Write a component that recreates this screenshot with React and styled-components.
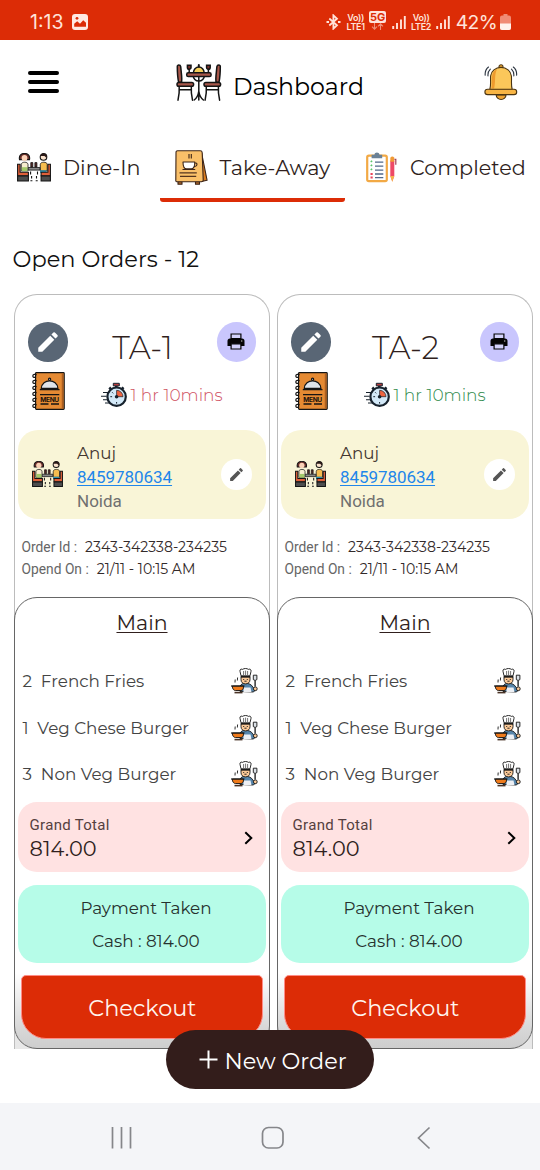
import React from 'react';
import styled, { createGlobalStyle } from 'styled-components';

const Global = createGlobalStyle`
  *{box-sizing:border-box}
  body{margin:0;background:#fff;overflow:hidden}
  svg{display:block;flex:none}
`;
const display = 'Montserrat, Inter, sans-serif';
const body = 'Roboto, "Liberation Sans", sans-serif';
const red = '#dc2c06';
const ink = '#301f1d';
const line = '#141414';

const Screen = styled.div`
  position:relative;width:540px;height:1170px;display:flex;flex-direction:column;
  background:#fff;font-family:${display};color:${ink};white-space:nowrap;
`;
const StatusBar = styled.div`
  height:40px;background:${red};color:#ffe3da;display:flex;align-items:center;
  padding:4px 29px 0 30px;font-family:Inter, sans-serif;
`;
const Clock = styled.span`font-size:19.5px;line-height:24px;width:42px;`;
const Indicators = styled.div`margin-left:auto;display:flex;align-items:center;height:20px;`;
const Volte = styled.div`
  width:21px;margin-left:4.5px;font-size:9px;font-weight:600;
  letter-spacing:-.3px;display:flex;flex-direction:column;align-items:center;
  span{line-height:9px}
`;
const Network = styled.div`margin:-3px 0 0 3px;width:17px;display:flex;flex-direction:column;align-items:center;`;
const Badge = styled.div`
  width:17px;height:12px;border-radius:2px;background:#ffe3da;color:${red};
  font-size:11px;line-height:12px;font-weight:700;text-align:center;
`;
const Percent = styled.span`font-size:19.3px;line-height:24px;letter-spacing:-.6px;margin:0 3px 0 6px;`;

const Header = styled.header`
  height:97px;padding:24px 22.5px 0 28px;display:grid;grid-template-columns:148px 1fr auto;align-items:start;
`;
const MenuButton = styled.div`
  width:31px;margin-top:7px;display:grid;gap:5.3px;
  i{height:3.8px;border-radius:2px;background:#000}
`;
const Brand = styled.div`display:flex;gap:10px;color:#000;`;
const BrandName = styled.h1`margin:10.5px 0 0;font-size:23.65px;font-weight:400;line-height:24px;`;

const Tabs = styled.nav`height:65px;display:flex;`;
const Tab = styled.div`
  width:${p => p.$w}px;padding-left:${p => p.$pad}px;display:flex;align-items:center;gap:${p => p.$gap}px;
  font-size:20.7px;line-height:24px;flex:none;border-radius:0 0 3px 3px;
  border-bottom:4px solid transparent;
  ${p => p.$active && `background:linear-gradient(to top, ${red} 4px, transparent 4px) border-box;`}
`;
const SectionTitle = styled.h2`
  margin:43px 0 0 12.6px;font-size:22.5px;font-weight:400;line-height:28px;color:#111;
`;
const Cards = styled.main`margin:21px 7px 0 14px;display:grid;grid-template-columns:256px 256px;gap:7px;`;
const Card = styled.article`
  height:755px;border:1px solid #bcbcbc;border-bottom:0;border-radius:23px 23px 0 0;
  display:flex;flex-direction:column;
  background:linear-gradient(to top, #e8e8e8 14px, #fff 14px);
`;
const CardHead = styled.div`height:67px;padding:27px 13px 0 13px;display:flex;`;
const Circle = styled.div`
  width:${p => p.$size}px;height:${p => p.$size}px;border-radius:50%;background:${p => p.$bg};
  display:flex;align-items:center;justify-content:center;flex:none;
`;
const TableName = styled.h3`
  flex:1;margin:6.5px 0 0 1px;text-align:center;font-size:31.2px;line-height:39px;font-weight:350;
`;
const TimeRow = styled.div`height:38px;margin:10px 0 0 17px;display:flex;gap:36px;`;
const Elapsed = styled.div`
  display:flex;align-items:center;gap:2.5px;padding-top:7px;font-size:17px;font-weight:300;
  line-height:20px;color:${p => p.$color};
`;
const Customer = styled.section`
  margin:20px 3px 0;height:89px;border-radius:20px;background:#f9f5d7;
  padding:0 14px;display:flex;align-items:center;
`;
const Contact = styled.div`
  flex:1;margin-left:14px;font:400 17px/24.4px ${body};color:#707070;
  padding-top:5.4px;display:flex;flex-direction:column;
`;
const Name = styled.span`font:400 16.7px/24.4px ${display};color:#43352f;`;
const Phone = styled.a`color:#1f86ea;text-decoration:underline;text-decoration-thickness:1px;text-underline-offset:2px;letter-spacing:-.05px;`;
const Meta = styled.dl`margin:17px 0 0 6.5px;height:44px;`;
const MetaRow = styled.div`
  display:flex;gap:8px;height:22px;font:400 13.8px/22px ${body};color:#666;
  dt,dd{margin:0}
  dd{font:400 14.05px/22px ${display};color:#332a2a}
`;
const Order = styled.section`
  margin:16.5px -1px 0;height:452.5px;border:1.4px solid #666;border-radius:23px;padding:12px 2.6px 0;
  background:linear-gradient(#fff 0, #fff 375px, #d9d9d9 428px, #cecece 100%);
`;
const Category = styled.h4`
  margin:0 0 22.5px;text-align:center;font-size:20.5px;line-height:26px;font-weight:400;
  text-decoration:underline;text-decoration-thickness:1.3px;text-underline-offset:2px;
`;
const Item = styled.div`
  height:46.5px;padding:0 8.5px 0 5px;display:flex;align-items:center;font-size:16.8px;color:#444;
  gap:8.7px;
  svg{margin-left:auto}
`;
const Total = styled.div`
  margin-top:4.5px;height:70px;border-radius:19px;background:#ffe2e2;padding:3px 13px 0 12px;
  display:flex;align-items:center;justify-content:space-between;
  svg{margin-top:-2px}
`;
const TotalLabel = styled.div`font:400 15px/20px ${body};letter-spacing:.3px;color:#553f3f;`;
const TotalValue = styled.div`font-size:20.9px;line-height:28px;`;
const Payment = styled.div`
  margin-top:13px;height:78px;border-radius:19px;background:#b6fce8;padding:7px 0 0 8px;
  text-align:center;font-size:16.8px;line-height:33px;color:#26312e;
`;
const Checkout = styled.button`
  display:block;margin:12px 3px 0;width:242.5px;height:63.500px;border:1.5px solid #ff8c86;
  border-radius:5px 5px 25px 25px;background:${red};color:#fff5ee;padding:2px 0 0 1px;
  font:400 22.4px/28px ${display};
`;
const NewOrder = styled.button`
  position:absolute;left:166px;top:1029.5px;width:207.5px;height:59px;border:0;border-radius:29.5px;
  background:#331d1b;color:#fff;display:flex;align-items:center;gap:6.5px;padding:0 0 0 33px;
  font:400 22.4px/28px ${display};
  span{margin-top:4.500px}
`;
const NavBar = styled.footer`
  margin-top:auto;height:67px;background:#f4f5f8;display:flex;align-items:center;
  padding:2px 109px 0 111px;
  svg + svg{margin-left:128px}
  svg + svg + svg{margin-left:132px}
`;

const Signal = ({ ml }) => (
  <svg width="14" height="16" viewBox="0 0 14 16" style={{ marginLeft: ml }}>
    <path d="M1.2 12v3M5 9v6M9 5.5V15M12.8 2v13" stroke="#ffe3da" strokeWidth="1.9" />
  </svg>
);

const DiningSet = () => (
  <svg width="47" height="38" viewBox="0 0 47 38" stroke={line} strokeWidth="1.5" strokeLinecap="round">
    <circle cx="22.8" cy="11.5" r="5.6" fill="none" />
    <path d="M17.4 8.8a5.4 5.8 0 0 1 10.8 0z" fill="#f6cf5a" />
    <path d="M22.8 1v1.6" strokeWidth="2" />
    <path d="M22.8 13v23M22.8 27c-.5 4-2 7-4.6 9M22.8 27c.5 4 2 7 4.6 9" fill="none" />
    <rect x="10.7" y="8.8" width="24.4" height="3.8" rx="1.6" fill="#a8574a" />
    {[0, 1].map(i => (
      <g key={i} transform={i ? 'translate(45.6 0) scale(-1 1)' : undefined}>
        <path d="M1.3 2.6c-.3-2 3.1-2 3.4 0l.9 9c.2 2.5.3 4.5 0 6.7H2.6C1.5 13 1.3 8 1.3 2.6z" fill="#a8574a" />
        <rect x="1" y="18.4" width="16.6" height="3.9" rx="1.8" fill="#a8574a" />
        <path d="M3.2 22.5c.3 5-.2 9.5-1.2 13.7M15.3 22.5c-.3 5 .2 9.5 1.2 13.7M3.4 25.8h11.7" fill="none" />
        <path d="M11.4 1.2h3.6v2.3a1.8 1.8 0 0 1-3.6 0z" fill="#7c302b" />
        <path d="M13.2 5.2v3" />
      </g>
    ))}
  </svg>
);

const Bell = () => (
  <svg width="34" height="37" viewBox="0 0 34 37" stroke="#4b3513" strokeWidth="1.1" strokeLinecap="round">
    <circle cx="17" cy="2.7" r="2" fill="#e9a12e" />
    <path d="M12.2 31a4.9 4.5 0 0 0 9.8 0z" fill="#f0a533" />
    <path d="M5.8 25.5C7.2 21 6.3 17 6.600 12c.5-5 4.900-8.600 10.400-8.600S26.900 7 27.400 12c.4 5-.5 9 .8 13.500z" fill="#fbc75a" />
    <path d="M7.400 24.600c.7-4 .2-8 .7-12.300.4-3.500 2-6 5-7.300-1.500 3-1.900 6-2 9.500-.1 3.700-.3 7-1 10.100z" fill="#ee9b2e" stroke="none" />
    <rect x=".9" y="25.2" width="31.8" height="5.4" rx="2.7" fill="#f8b544" />
    <path d="M1.2 11.2C.9 8 2 5 4.500 3M4 12c-.3-2.800.5-5 2.300-6.800M32.600 11.200c.3-3.200-.8-6.200-3.300-8.200M29.800 12c.3-2.800-.5-5-2.300-6.800" fill="none" stroke="#2b3440" />
  </svg>
);

const Diners = ({ w = 34 }) => (
  <svg width={w} height={w * 29 / 34} viewBox="0 0 34 29" stroke={line} strokeWidth="1.1">
    <path d="M2.500 6.600C1.600 2.200 4.500.4 7.500.4s5.900 1.800 5 6.200z" fill="#6b2f2a" />
    <circle cx="7.500" cy="4.900" r="2.900" fill="#fbd3b8" stroke="none" />
    <circle cx="26.500" cy="3.900" r="3.300" fill="#fbe3cd" />
    <path d="M23.200 3C23.400-.2 29-.6 29.900 3l-.4 2-2-2z" fill="#2a1917" stroke="none" />
    <path d="M4.300 17.900v-6.500c0-2.900 6.700-2.900 6.700 0v6.500z" fill="#f6eecf" strokeWidth=".8" />
    <path d="M4.800 14.200h5.700v4H4.800z" fill="#a3c96a" stroke="none" />
    <path d="M23.300 17.900v-6.500c0-2.900 6.900-2.900 6.900 0v6.500z" fill="#f5bd50" strokeWidth=".8" />
    <path d="M23 17.300h6.500v2.500H23z" fill="#2f93b5" stroke="none" />
    <path d="M.6 11.300h2.500v7.900h8.300v3.500H.6zM33.400 11.300h-2.500v7.900h-6.800v3.500h9.300z" fill="#e0603a" />
    <path d="M.6 23h10.800v5H.6zM24.100 23h9.300v5h-9.300z" fill="#4d4d4d" />
    <path d="M11.200 14.500h11.700v2.600H11.200z" fill="#8a8a8a" strokeWidth=".8" />
    <path d="M13.800 14V9.600h2V14zM17.900 14V9.600h2V14z" fill="#5b2a26" strokeWidth=".8" />
    <path d="M13.600 18.500v3M14.600 23v2.500M13.400 27.700h2M20.500 18.500v3M19.500 23v2.500M18.700 27.700h2" fill="none" strokeWidth="1.100" />
  </svg>
);

const CafeBoard = () => (
  <svg width="33" height="36" viewBox="0 0 33 36" stroke="#3b2418" strokeWidth="1.1" strokeLinejoin="round">
    <path d="M3 31h4v3.2H3zM20.500 31h4v3.2h-4z" fill="#a4622a" />
    <path d="M26.500 2.500l5.600 27.800-5.600 1.200z" fill="#d87a1c" />
    <path d="M2.600.8h22.700q1.800 0 1.900 1.900l1 27q.1 2-1.700 2H1.800Q.6 31.700.8 30L1 2.400Q1 .8 2.600.8z" fill="#fac069" />
    <path d="M14 4v4.600M16.300 4v4.600" />
    <path d="M8 12h11.800c0 3.800-1 6.900-3.700 6.900h-4.500C9 18.900 8 15.800 8 12z" fill="#fff" />
    <path d="M19.800 13c3-.6 3 3.400-.8 3.600M7.500 19.500h12.700" fill="none" />
    <path d="M4.500 22.900h17.300M5 26.400h16.200" stroke="#54341f" />
  </svg>
);

const Clipboard = () => (
  <svg width="31" height="31" viewBox="0 0 31 31">
    <rect x="1.200" y="3.700" width="19.600" height="25.500" rx="1.700" fill="#fff" stroke="#f2a945" strokeWidth="2.200" />
    <path d="M5.600 2.800h2.800C8.600-.4 13.300-.4 13.500 2.800h2.700v3.400H5.600z" fill="#6b8196" />
    <path d="M9 10.200h8.300M9 14.200h8.300M9 18.200h8.300M9 22h8.300M9 25.600h8.300" stroke="#52698a" strokeWidth="1.300" />
    <path d="M4.700 9.800l1.500-1M4.700 13.800l1.500-1M4.700 17.800l1.500-1" stroke="#5cc46a" strokeWidth="1.600" />
    <path d="M4.500 21.900h2.200M4.500 25.500h2.200" stroke="#e8435c" strokeWidth="2" />
    <path d="M24.300 8.500h4V24l-2 5.500-2-5.500z" fill="#ee4966" />
    <path d="M24.300 24h4l-2 6z" fill="#f6b34b" />
    <path d="M24.300 5.800q2-2.400 4 0v4h-4z" fill="#f19a35" />
    <path d="M28.500 7.300h1.300v5.500" stroke="#a34356" strokeWidth="1.200" fill="none" />
  </svg>
);

const MenuBook = () => (
  <svg width="33" height="38" viewBox="0 0 33 38" stroke={line} strokeWidth="1.200">
    <rect x="3.600" y=".7" width="28.600" height="36.600" rx=".8" fill="#e58a33" />
    <path d="M30.500 1.300v35.400" stroke="#ad5f20" strokeWidth="1.500" />
    {[4, 10, 16, 22, 28, 34].map(y => <path key={y} d={`M4.500 ${y - .8}c-1-1.300-3.700-1-3.700.8 0 1.500 1.800 1.700 2.600 1`} fill="none" />)}
    <path d="M9.300 16.300c.5-10 16-10 16.600 0z" fill="#dfe4ea" />
    <circle cx="17.600" cy="7.200" r="1.100" fill="#dfe4ea" />
    <path d="M7.800 17.700h19.700M8 22.700h19.300M8.500 32h8M19 32h8" strokeWidth="1.300" />
    <text x="8.200" y="30" textLength="19" lengthAdjust="spacing" fontFamily="Inter, sans-serif" fontWeight="700" fontSize="6.600" fill="#21130b" stroke="none">MENU</text>
  </svg>
);

const Stopwatch = () => (
  <svg width="27" height="26" viewBox="0 0 27 26" stroke="#17222d">
    <path d="M12.300 1.300h6v2.600h-6z" fill="#b83d3d" strokeWidth="1" />
    <path d="M15.300 4v2M8.300 5.500l1.800 1.800M22.500 5.300l-2 2" strokeWidth="2.600" />
    <circle cx="15.600" cy="14.700" r="9.200" fill="#d3e9f8" strokeWidth="2.200" />
    <path d="M15.600 14.700V8.300a6.400 6.400 0 0 1 6.400 6.400z" fill="#ef6440" strokeWidth=".7" />
    <circle cx="15.600" cy="14.700" r="1.800" fill="#17222d" stroke="none" />
    <path d="M9.300 14.700h1.800M15.600 20v1.600M11.200 10.300l1 1" strokeWidth="1" />
    <path d="M2 10.500h5M0 14.200h5.500M2 17.800h4.500M4 21h4.500" strokeWidth="1.100" />
  </svg>
);

const Chef = () => (
  <svg width="27" height="26" viewBox="0 0 27 26" stroke={line} strokeWidth=".9">
    <path d="M9 23.500v-5c.8-2.500 3-3.300 5.500-3.300s6 1 7.300 3.800L24.500 22l-2 2z" fill="#5685ab" />
    <path d="M12.500 19.500h7l1 4.500h-8z" fill="#eef0f4" stroke="none" />
    <path d="M10 8.200h9v3.500c0 5.600-9 5.600-9 0z" fill="#fbc997" />
    <path d="M10 7.800L9 3.300C8.300 1 11 .8 11.700 1.400c1-1.200 4.600-1.200 5.600 0 1-.7 3.300-.2 2.700 2L19 7.800z" fill="#fff" />
    <path d="M12.600 3v4M14.600 2.600V7M16.600 3v4" strokeWidth=".6" />
    <path d="M10 8.900h9" strokeWidth="1.500" />
    <path d="M12.700 11v1M16.300 11v1M13.400 13.200h2.200" />
    <path d="M1.300 18h11.200c.2 3-.9 4.500-2.600 4.500H4.400c-1.600 0-3.100-1.500-3.100-4.500z" fill="#ef7b1c" />
    <path d="M0 18h13.500" strokeWidth="1.100" />
    <path d="M3.500 24.600h8" strokeWidth="1.600" stroke="#4a3326" />
    <path d="M4 14.500c-.4-1.200.5-1.700.2-3M6.400 12.500c-.4-1.200.5-1.700.2-3" fill="none" />
    <path d="M22.300 7.200h3.600v4.400q-1.800 1.700-3.600 0z" fill="#dce2e8" />
    <path d="M24.100 12.500v6" strokeWidth="1.300" />
    <circle cx="24.300" cy="20.800" r="1.900" fill="#fbc997" />
  </svg>
);

const Pencil = ({ size, color }) => (
  <svg width={size} height={size} viewBox="0 0 24 24" fill={color}>
    <path d="M3 17.250V21h3.750L17.810 9.940l-3.750-3.750L3 17.250zM20.710 7.040a1 1 0 0 0 0-1.410l-2.340-2.340a1 1 0 0 0-1.410 0l-1.830 1.830 3.750 3.750 1.830-1.830z" />
  </svg>
);
const Printer = () => (
  <svg width="18" height="17" viewBox="0 0 18 17">
    <path d="M3 5.500h12A2.500 2.500 0 0 1 17.500 8v5h-17V8A2.500 2.500 0 0 1 3 5.500z" fill="#050505" />
    <path d="M4.100 1h9.800v4.600H4.100z" fill="#d3d2fb" stroke="#050505" strokeWidth="1.200" />
    <path d="M4.100 10.800h9.800V16H4.100z" fill="#d3d2fb" stroke="#050505" strokeWidth="1.200" />
    <circle cx="14.700" cy="8" r=".8" fill="#aaa" />
  </svg>
);

const items = [[2, 'French Fries'], [1, 'Veg Chese Burger'], [3, 'Non Veg Burger']];
const orders = [
  { name: 'TA-1', color: '#cf5263' },
  { name: 'TA-2', color: '#2f8a4c' },
];

const OrderCard = ({ name, color }) => (
  <Card>
    <CardHead>
      <Circle $size={39.5} $bg="#596675"><Pencil size={26} color="#fff" /></Circle>
      <TableName>{name}</TableName>
      <Circle $size={39.5} $bg="#c9c6fd"><Printer /></Circle>
    </CardHead>
    <TimeRow>
      <MenuBook />
      <Elapsed $color={color}><Stopwatch />1 hr 10mins</Elapsed>
    </TimeRow>
    <Customer>
      <Diners w={31} />
      <Contact>
        <Name>Anuj</Name>
        <Phone>8459780634</Phone>
        <span>Noida</span>
      </Contact>
      <Circle $size={31.5} $bg="#fff"><Pencil size={17} color="#555" /></Circle>
    </Customer>
    <Meta>
      <MetaRow><dt>Order Id :</dt><dd>2343-342338-234235</dd></MetaRow>
      <MetaRow><dt>Opend On :</dt><dd>21/11 - 10:15 AM</dd></MetaRow>
    </Meta>
    <Order>
      <Category>Main</Category>
      {items.map(([qty, label]) => (
        <Item key={label}><span>{qty}</span><span>{label}</span><Chef /></Item>
      ))}
      <Total>
        <div>
          <TotalLabel>Grand Total</TotalLabel>
          <TotalValue>814.00</TotalValue>
        </div>
        <svg width="9" height="14" viewBox="0 0 9 14"><path d="M1.300 1.200L7.300 7l-6 5.800" fill="none" stroke="#000" strokeWidth="2" /></svg>
      </Total>
      <Payment>
        <div>Payment Taken</div>
        <div>Cash : 814.00</div>
      </Payment>
      <Checkout>Checkout</Checkout>
    </Order>
  </Card>
);

export default function App() {
  return (
    <Screen>
      <Global />
      <StatusBar>
        <Clock>1:13</Clock>
        <svg width="16" height="16" viewBox="0 0 16 16">
          <rect width="16" height="16" rx="3" fill="#ffe9e2" />
          <path d="M2.200 12.800V9.800l3-2.600 2.800 2.600 3.200-3.600 2.800 2.600v4z" fill={red} />
          <circle cx="5" cy="4.300" r="1.400" fill={red} />
        </svg>
        <Indicators>
          <svg width="15" height="16" viewBox="0 0 15 16" fill="none" stroke="#ffe3da" strokeWidth="1.800">
            <path d="M3.300 4.500l7.700 6.700L7.400 14.600V1.400L11 4.800l-7.700 6.700" />
            <path d="M.5 8h2.500M12 8h2.500" strokeWidth="2" />
          </svg>
          <Volte><span>Vo))</span><span>LTE1</span></Volte>
          <Network>
            <Badge>5G</Badge>
            <svg width="13" height="7" viewBox="0 0 13 7" fill="none" stroke="#ee8e78" strokeWidth="1.100"><path d="M3.500 0v6M1 3.600l2.500 2.500L6 3.600M9.500 7V1M7 3.400L9.500.9 12 3.400" /></svg>
          </Network>
          <Signal ml={6} />
          <Volte><span>Vo))</span><span>LTE2</span></Volte>
          <Signal ml={4} />
          <Percent>42%</Percent>
          <svg width="11" height="16" viewBox="0 0 11 16">
            <path d="M3.500 0h4v1.500H9q2 0 2 2v10.500q0 2-2 2H2q-2 0-2-2V3.500q0-2 2-2h1.500z" fill="#f08b74" />
            <path d="M0 9.500h11V14q0 2-2 2H2q-2 0-2-2z" fill="#fff2ec" />
          </svg>
        </Indicators>
      </StatusBar>

      <Header>
        <MenuButton><i /><i /><i /></MenuButton>
        <Brand><DiningSet /><BrandName>Dashboard</BrandName></Brand>
        <Bell />
      </Header>

      <Tabs>
        <Tab $w={160} $pad={17} $gap={12}><Diners />Dine-In</Tab>
        <Tab $w={184.5} $pad={14.5} $gap={12}  $active><CafeBoard />Take-Away</Tab>
        <Tab $w={195} $pad={21.5} $gap={13}><Clipboard />Completed</Tab>
      </Tabs>

      <SectionTitle>Open Orders - 12</SectionTitle>
      <Cards>{orders.map(o => <OrderCard key={o.name} {...o} />)}</Cards>

      <NewOrder>
        <svg width="19" height="19" viewBox="0 0 19 19"><path d="M9.500.5v18M.5 9.500h18" stroke="#fff" strokeWidth="2" /></svg>
        <span>New Order</span>
      </NewOrder>

      <NavBar>
        <svg width="22" height="22" viewBox="0 0 22 22"><path d="M1.500 0v21.500M10.500 0v21.500M19.500 0v21.500" stroke="#85868a" strokeWidth="1.700" /></svg>
        <svg width="24" height="24" viewBox="0 0 24 24"><rect x="1.500" y="1.500" width="20.500" height="20.500" rx="6" fill="none" stroke="#85868a" strokeWidth="1.700" /></svg>
        <svg width="14" height="24" viewBox="0 0 14 24"><path d="M12.500 1.500L1.500 12l11 10.500" fill="none" stroke="#85868a" strokeWidth="1.700" /></svg>
      </NavBar>
    </Screen>
  );
}
